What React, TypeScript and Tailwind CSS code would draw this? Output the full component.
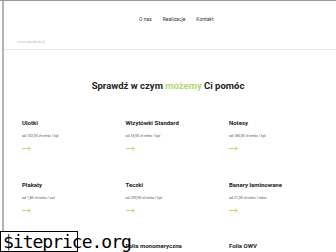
const products = [
  { name: 'Ulotki', price: 'od 102,00 zł netto / kpl' },
  { name: 'Wizytówki Standard', price: 'od 33,00 zł netto / kpl' },
  { name: 'Notesy', price: 'od 185,00 zł netto / kpl' },
  { name: 'Plakaty', price: 'od 1,80 zł netto / szt.' },
  { name: 'Teczki', price: 'od 209,00 zł netto / kpl' },
  { name: 'Banery laminowane', price: 'od 21,00 zł netto / mkw' },
  { name: 'Naklejki i etykiety', price: 'od 12,00 zł netto / kpl' },
  { name: 'Folia monomeryczna', price: 'od 35,00 zł netto / mkw' },
  { name: 'Folia OWV', price: 'od 59,00 zł netto / mkw' },
]

function Arrow() {
  return (
    <svg width="9" height="5" viewBox="0 0 9 5" fill="none" stroke="#b5d95a" strokeWidth="0.9">
      <path d="M0 2.5H8.3" />
      <path d="M6.3 0.6L8.3 2.5L6.3 4.4" />
    </svg>
  )
}

export default function App() {
  return (
    <div className="relative w-[336px] h-[252px] overflow-hidden bg-white border-t border-[#9a9a9a] font-['Roboto',sans-serif] text-[#222]">
      <div className="ml-[2px] h-full border-l-2 border-[#b4b4b4]">
        {/* Header */}
        <div className="h-[48px]">
          <nav className="flex gap-[11px] pl-[135px] pt-[15px] text-[5px] leading-[6px] text-[#333]">
            <span>O nas</span>
            <span>Realizacje</span>
            <span>Kontakt</span>
          </nav>
          <div className="pl-[13px] pt-[18px] text-[3.6px] leading-[5px] text-[#bdbdbd]">
            www.rabatdruk.pl
          </div>
        </div>
        <div className="h-px bg-[#e6e6e6]" />

        {/* Heading */}
        <h1 className="pt-[30px] text-center text-[9.5px] leading-[12px] font-bold pr-[4px]">
          Sprawdź w czym <span className="text-[#b1da6a]">możemy</span> Ci pomóc
        </h1>

        {/* Products */}
        <div className="grid grid-cols-[103.5px_103.5px_103.5px] pl-[18px] pt-[27px]">
          {products.map((p) => (
            <div key={p.name} className="h-[61.5px]">
              <div className="text-[6px] leading-[8px] font-bold text-[#222]">{p.name}</div>
              <div className="mt-[7px] text-[3.6px] leading-[5px] text-[#555]">{p.price}</div>
              <div className="mt-[7px]">
                <Arrow />
              </div>
            </div>
          ))}
        </div>
      </div>

      {/* watermark */}
      <div className="absolute left-0 bottom-0 h-[21px] w-[78px] border border-black bg-white px-[2px] text-[18px] leading-[19px] font-['DejaVu_Sans_Mono',monospace] text-black tracking-[-1px]">
        $iteprice.org
      </div>
    </div>
  )
}
